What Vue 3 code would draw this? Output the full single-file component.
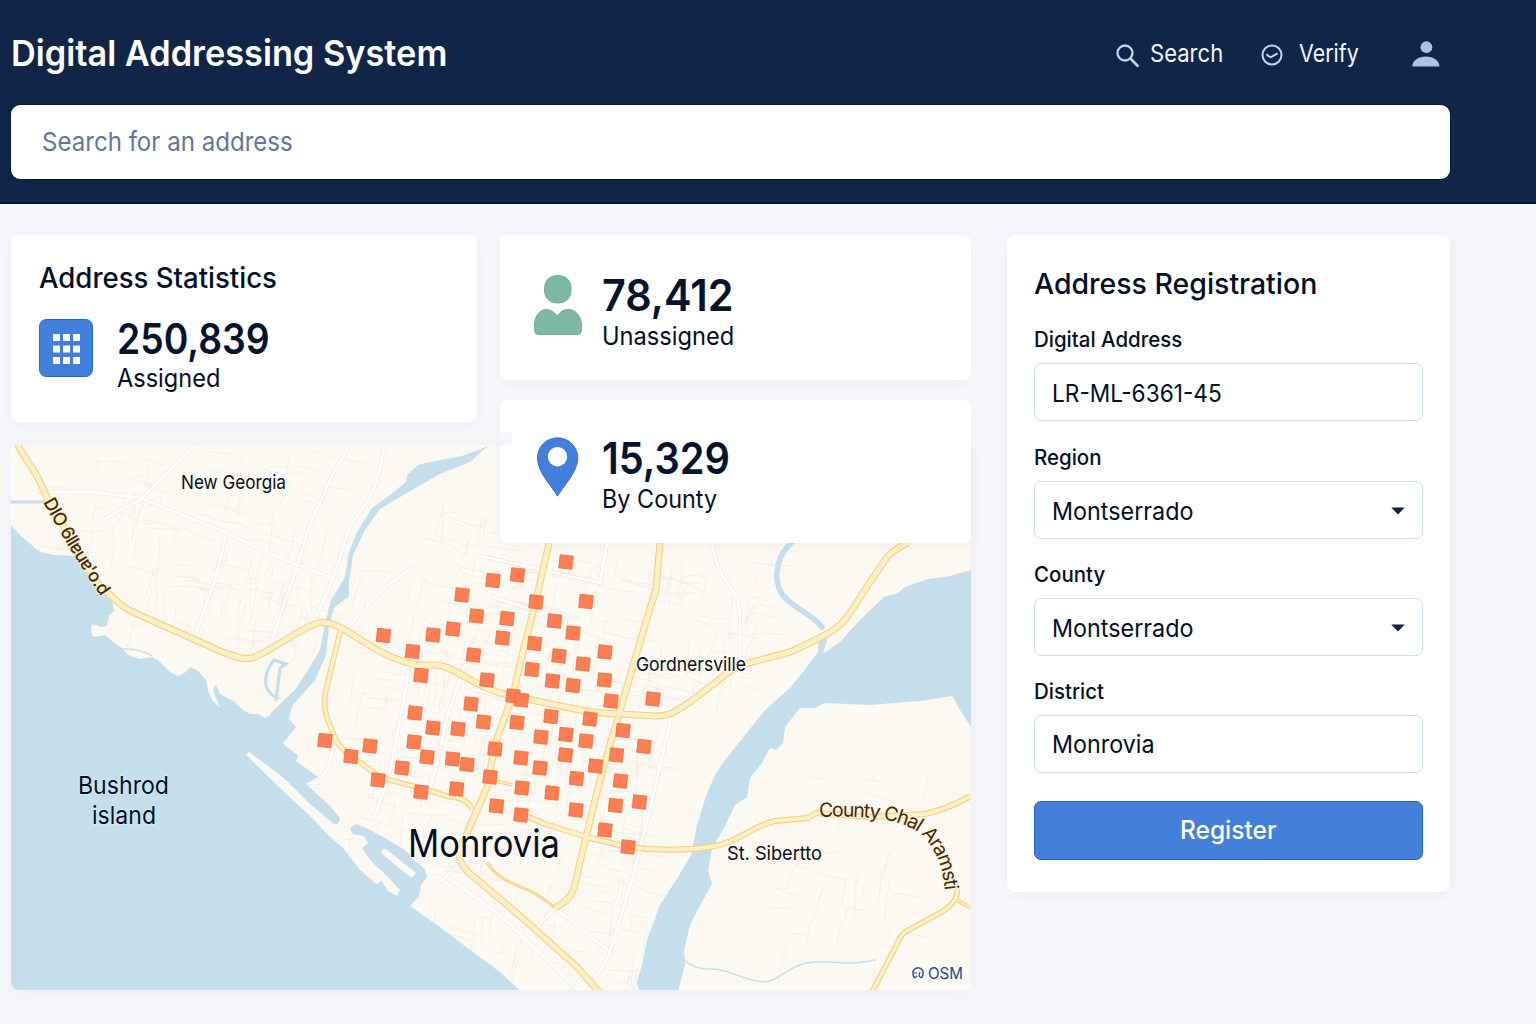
<script setup>
const stats = [
  { id: 'unassigned', value: '78,412', label: 'Unassigned' },
  { id: 'county', value: '15,329', label: 'By County' },
]

const fields = [
  { id: 'address', label: 'Digital Address', value: 'LR-ML-6361-45', select: false },
  { id: 'region', label: 'Region', value: 'Montserrado', select: true },
  { id: 'county', label: 'County', value: 'Montserrado', select: true },
  { id: 'district', label: 'District', value: 'Monrovia', select: false },
]

const gridDots = [0, 1, 2].flatMap((r) => [0, 1, 2].map((c) => ({ x: 14 + c * 10, y: 15 + r * 11.5 })))

// Registered addresses, in map coordinates
const markers = [
  [566, 562], [517.5, 575], [493, 580.5], [462, 595], [536, 602], [586, 601.5], [476.5, 616], [507, 618.5], [554.5, 621],
  [453, 629], [433, 635], [383.5, 635.5], [573, 633], [502.5, 638], [534.5, 643.5], [412.5, 651.5], [605, 652], [559, 656],
  [473.5, 655], [583, 664], [532, 669.5], [421, 675.5], [487, 680], [552.5, 681], [573, 685.5], [604.5, 680], [653, 699],
  [611, 701], [513, 696], [521.5, 700], [471, 704], [415, 713], [551, 716.5], [590, 719], [483.5, 722], [517, 722.5],
  [433, 728], [458, 729], [623, 730.5], [566, 734.5], [541, 737], [325, 740.5], [414, 742], [586, 741], [644, 746.5],
  [370, 746], [495, 749], [565.5, 755], [616.5, 755], [351, 756.5], [427, 757], [521, 758], [452.5, 759], [467, 764.5],
  [595.5, 766], [402, 768], [540, 768], [490, 777], [378, 780], [576.5, 778.5], [620.5, 781], [522, 788], [456.5, 789],
  [421, 792], [552, 793], [496.5, 806], [639.5, 802], [615.5, 805.5], [576, 810], [521, 815], [605, 830], [628, 847],
]

const roads = [
  { w: 6, d: 'M17 443C22 456 34 468 39 480L48 500L95 580L110 595C120 604 125 609 135 613L220 651C236 657 243 660 252 658C270 652 300 628 318 623C330 621 340 627 348 632C375 648 380 655 415 665C425 667 433 663 442 666C462 671 478 690 513 696L570 708Q600 714 620 714L655 716C668 716 672 714 690 702L725 675Q736 667 745 664L790 652Q815 641 830 632C845 624 852 610 862 594L885 560Q892 550 908 543' },
  { w: 4.5, d: 'M341 628L326 690C322 712 328 720 335 738C341 752 356 758 378 776Q384 779 421 788L450 797Q468 798 472 810' },
  { w: 6, d: 'M549 543L535 605Q519 665 514 692L503 722Q493 745 488 785L465 838C456 852 458 862 468 872L520 916L576 966L600 993' },
  { w: 6, d: 'M660 543L656 590L645 625L619 714L600 780L580 862Q574 892 570 896Q566 902 555 908' },
  { w: 1.8, d: 'M487 862C494 876 510 883 528 890Q542 897 555 908' },
  { w: 5, d: 'M521 814L545 824L590 838L628 847C660 851 690 850 710 847C740 842 752 826 775 821L808 818L816 813L870 817L925 814Q945 810 971 796' },
  { w: 2.5, d: 'M492 780L512 785' },
  { w: 3, d: 'M957 900L971 908' },
  { w: 4.5, d: 'M957 888C959 900 950 908 936 915L905 932Q900 936 895 948L872 992' },
]

const lanes = [
  'M50 492L95 492L140 498L220 530L280 558L332 578', 'M198 443L140 500L102 520', 'M385 443C378 480 376 495 352 522C342 545 338 575 316 616',
  'M352 440L330 480L308 530Q300 560 271 642', 'M226 535L215 580L195 636', 'M480 556L530 567L600 583L607 543', 'M412 568L384 588L350 625',
  'M492 597L530 609', 'M409 670L399 725L388 780L374 818', 'M465 665L446 720L438 760L430 788', 'M712 543Q716 570 730 586Q740 598 740 620L740 660',
  'M671 718L652 800L635 870L612 945Q608 962 594 978', 'M332 752Q330 768 318 783L280 782', 'M452 880L500 915L580 992', 'M537 927L555 908L610 952', 'M440 882L458 866',
]

// Faint side streets, laid out from a small seeded generator
function makeStreets() {
  let seed = 7
  const rnd = () => (seed = (seed * 16807) % 2147483647) / 2147483647
  const zones = [
    [130, 450, 330, 640, 120], [350, 560, 660, 700, 130], [340, 690, 660, 850, 150], [430, 850, 650, 985, 80],
    [640, 560, 760, 700, 60], [760, 850, 900, 950, 30], [800, 730, 965, 800, 8], [420, 500, 500, 580, 20], [30, 450, 140, 560, 20],
  ]
  let d = ''
  for (const [x0, y0, x1, y1, n] of zones) {
    for (let i = 0; i < n; i++) {
      const x = x0 + rnd() * (x1 - x0)
      const y = y0 + rnd() * (y1 - y0)
      const a = 0.2 + (rnd() > 0.5 ? Math.PI / 2 : 0) + (rnd() - 0.5) * 0.35
      const l = 10 + rnd() * 34
      const dx = Math.cos(a) * l
      const dy = Math.sin(a) * l
      d += `M${x.toFixed(1)} ${y.toFixed(1)}q${(dx / 2 + (rnd() - 0.5) * 8).toFixed(1)} ${(dy / 2 + (rnd() - 0.5) * 8).toFixed(1)} ${dx.toFixed(1)} ${dy.toFixed(1)}`
    }
  }
  return d
}
const streets = makeStreets()
</script>

<template>
  <div class="app">
    <header class="header">
      <div class="topbar">
        <h1 class="brand t">Digital Addressing System</h1>
        <nav class="nav">
          <a class="nav-item search-link">
            <svg width="24" height="24" viewBox="0 0 24 24" fill="none" stroke="#bdd7f7" stroke-width="2.3">
              <circle cx="9" cy="9" r="7.5" /><path d="M14.4 14.4L22.3 22.6" stroke-width="2.8" />
            </svg>
            <span class="t">Search</span>
          </a>
          <a class="nav-item verify-link">
            <svg width="22" height="22" viewBox="0 0 22 22" fill="none" stroke="#bdd7f7" stroke-width="2">
              <circle cx="11" cy="11" r="9.5" /><path d="M5.4 10.2Q8.6 14 10.8 12.6L16.6 9.4" />
            </svg>
            <span class="t">Verify</span>
          </a>
          <svg class="avatar" width="28" height="26" viewBox="0 0 28 26" fill="#a9c3e6">
            <circle cx="14.4" cy="6.2" r="5.9" /><path d="M0.3 25.6C0.3 19 7 15.4 14 15.4S27.4 19 27.4 25.6Z" />
          </svg>
        </nav>
      </div>
      <div class="search"><span class="t">Search for an address</span></div>
    </header>

    <main class="main">
      <section class="board">
        <div class="map">
          <svg width="960" height="545" viewBox="11 445 960 545">
            <rect x="11" y="445" width="960" height="545" fill="#fcf8f2" />
            <path :d="streets" fill="none" stroke="#f3f0ec" stroke-width="1" />
            <g fill="none" stroke-linecap="round" stroke-linejoin="round">
              <path v-for="(d, i) in lanes" :key="'a' + i" :d="d" stroke="#e9e6e3" stroke-width="4" />
              <path v-for="(d, i) in lanes" :key="'b' + i" :d="d" stroke="#fff" stroke-width="2.8" />
            </g>
            <g fill="#c5deeb">
              <path d="M11 525L21 536L40 552L54 555L76 556L84 570L105 590L112 600L114 611L109 616L107 626L101 627L92 624L91 631L93 637L105 635L112 641L122 648L128 655L140 659L152 657L160 662L170 672L178 676L186 672L190 667L198 671L206 680L208 690L212 700L220 708L213 690L216 684L220 694L235 702L243 710L250 714L258 714L265 718L272 714L280 708L296 727L283 743L285 746L298 755L296 761L318 777L306 784L330 806L340 818L338 824L334 824L310 804L284 778L249 752L246 755L278 786L312 818L328 835L343 848L360 870L376 884L382 881L388 891L397 896L400 890L386 875L372 862L362 848L368 843L364 836L353 834L350 828L356 824L366 828L385 838L405 850L414 860L425 869L427 877L421 885L419 896L410 906L444 930L470 950L500 972L520 991L11 991Z" />
              <path d="M488 446L462 456L430 462L418 465L407 475L406 482L390 495L372 508L357 532L349 552L345 577L331 600L325 624L320 650L308 670L295 690L280 704L270 714L288 722L292 706L315 680L326 655L329 625L334 608L349 596L349 580L353 555L365 530L380 509L410 491L440 474L470 462L488 446Z" />
              <path d="M971 570L950 576L928 579L905 587L898 593L884 597L860 620L840 642L823 654L827 640L826 632L819 636L818 652L803 672L790 688L765 710L745 735L725 760L715 775L706 796L697 825L691 855L678 877L660 905L647 940L642 965L637 982L639 991L678 991L685 965L684 950L690 925L703 900L712 884L708 870L712 848L724 828L735 805L747 797L750 778L762 763L770 748L776 750L783 743L785 727L800 708L815 708L825 703L870 705L920 701L952 696L960 710L971 727Z" />
            </g>
            <g fill="none" stroke="#c5deeb" stroke-linecap="round">
              <path d="M793 541C777 555 774 575 779 588C785 605 810 612 822 627" stroke-width="5.5" />
              <path d="M11 502L46 502" stroke-width="3" />
              <path d="M274 660Q264 672 266 686Q270 696 278 698M274 660L286 664L280 668L276 700" stroke-width="3" />
              <path d="M122 649Q140 648 152 656" stroke-width="1.5" />
              <path d="M684 960Q695 970 712 969C728 968 745 982 765 982C780 981 790 963 815 962C840 961 850 966 874 960" stroke-width="1.4" />
            </g>
            <path d="M381 850L386 849L416 873L412 878L404 872L382 854Z" fill="#fcf8f2" />
            <g fill="none" stroke-linejoin="round">
              <path v-for="(r, i) in roads" :key="'c' + i" :d="r.d" stroke="#f6ce7b" :stroke-width="r.w + 1" />
              <path v-for="(r, i) in roads" :key="'d' + i" :d="r.d" stroke="#fdf0c4" :stroke-width="r.w - 1" />
            </g>
            <g fill="#fc7e52" stroke="#f26a3a" stroke-width="0.8">
              <rect
                v-for="([x, y], i) in markers" :key="i" :x="x - 6.6" :y="y - 6.6" width="13.2" height="13.2"
                :transform="`rotate(6 ${x} ${y})`"
              />
            </g>
            <defs>
              <path id="west-road" d="M43 502Q72 555 102 598" />
              <path id="east-road" d="M819 817C868 815 905 819 923 836C936 850 943 868 945 890" />
            </defs>
            <g class="labels">
              <text x="181" y="488.500" font-size="19" textLength="105" lengthAdjust="spacingAndGlyphs">New Georgia</text>
              <text x="636" y="671" font-size="19" textLength="110" lengthAdjust="spacingAndGlyphs">Gordnersville</text>
              <text x="727" y="860" font-size="19" textLength="95" lengthAdjust="spacingAndGlyphs">St. Sibertto</text>
              <text x="78" y="793.500" font-size="24.500" textLength="91" lengthAdjust="spacingAndGlyphs" class="sea">Bushrod</text>
              <text x="92" y="823.500" font-size="24.500" textLength="64" lengthAdjust="spacingAndGlyphs" class="sea">island</text>
              <text x="408" y="856.500" font-size="38" textLength="152" lengthAdjust="spacingAndGlyphs">Monrovia</text>
              <text font-size="18" class="road west"><textPath href="#west-road" textLength="111">DIO 6llɐuɐ'o.d</textPath></text>
              <text font-size="19.500" class="road"><textPath href="#east-road" textLength="168">County Chal Aramsti</textPath></text>
              <text x="928" y="979" font-size="16" textLength="35" lengthAdjust="spacingAndGlyphs" class="credit">OSM</text>
            </g>
            <g fill="none" stroke="#2a5698" stroke-width="1.500">
              <path d="M914.500 978Q911.500 973 914 969.500Q918 966 922 969.500Q924.500 973 921.500 978" />
              <path d="M914 973L917 973M914.500 978L917 976M920 972L919 976L921.500 978" stroke-width="1.200" />
            </g>
          </svg>
        </div>

        <article class="card assigned">
          <h2 class="t">Address Statistics</h2>
          <div class="stat">
            <svg width="54" height="58" viewBox="0 0 54 58">
              <rect x="0.500" y="0.500" width="53" height="57" rx="7" fill="#417fda" stroke="#1c66d6" />
              <rect v-for="(p, i) in gridDots" :key="i" :x="p.x" :y="p.y" width="7" height="7" fill="#fff" />
            </svg>
            <div class="figures">
              <strong class="t">250,839</strong>
              <span class="t">Assigned</span>
            </div>
          </div>
        </article>

        <div class="side">
          <article v-for="s in stats" :key="s.id" class="card compact" :class="s.id">
            <svg v-if="s.id === 'unassigned'" class="glyph" width="48" height="60" viewBox="0 0 48 60" fill="#7fb7a6" stroke="#5fa68f" stroke-width="0.800">
              <rect x="10.500" y="0.500" width="26.500" height="27.500" rx="12" />
              <path d="M23.300 41C20 36.500 16 34.500 12.500 34.500C5 34.500 0.500 42 0.500 50V55.500Q0.500 59.500 4.500 59.500H43.500Q47.500 59.500 47.500 55.500V50C47.500 42 42 34.500 34.500 34.500C30 34.500 26 36.500 23.300 41Z" />
            </svg>
            <svg v-else class="glyph" width="48" height="60" viewBox="0 0 48 60">
              <path d="M23.500 59.200C18 49.500 3.400 35 3.400 21A20.200 20.200 0 0 1 43.800 21C43.800 35 29 49.500 23.500 59.200Z" fill="#417fda" stroke="#1c66d6" stroke-width="0.800" />
              <circle cx="23.500" cy="19.700" r="9.700" fill="#fff" />
            </svg>
            <div class="figures">
              <strong class="t">{{ s.value }}</strong>
              <span class="t">{{ s.label }}</span>
            </div>
          </article>
        </div>
      </section>

      <form class="card form" @submit.prevent>
        <h2 class="t">Address Registration</h2>
        <div v-for="f in fields" :key="f.id" class="field" :class="f.id">
          <label class="t">{{ f.label }}</label>
          <div class="control">
            <span class="t">{{ f.value }}</span>
            <svg v-if="f.select" width="14" height="8" viewBox="0 0 14 8"><path d="M0.300 0.500H13.700L7.800 6.800Q7 7.500 6.200 6.800Z" fill="#0f2145" /></svg>
          </div>
        </div>
        <button class="submit" type="submit"><span class="t">Register</span></button>
      </form>
    </main>
  </div>
</template>

<style>
body { background: #f5f5fa; }
</style>

<style scoped>
* { box-sizing: border-box; }
.app {
  width: 1536px; height: 1024px; overflow: hidden;
  background: #f5f5fa; color: #050f26;
  font-family: Inter, "Liberation Sans", sans-serif;
}
.t { display: block; width: max-content; white-space: nowrap; transform: scaleX(var(--sx, 0.93)); transform-origin: 0 50%; }
h1, h2 { margin: 0; }

.header { height: 203.5px; background: #112548; border-bottom: 2px solid #061534; padding: 0 86px 0 11px; }
.topbar { display: flex; justify-content: space-between; height: 105px; padding-top: 31px; }
.brand { --sx: 0.953; color: #fff; font-size: 36px; line-height: 44px; font-weight: 600; }
.nav { display: flex; align-items: flex-start; color: #f2f6fd; font-size: 24.5px; line-height: 30px; font-weight: 400; padding-top: 7px; }
.nav-item { display: flex; }
.search-link { width: 145px; gap: 10px; }
.search-link svg { margin-top: 6px; }
.search-link .t { --sx: 0.9; }
.verify-link { width: 151px; gap: 16px; }
.verify-link svg { margin-top: 6px; }
.verify-link .t { --sx: 0.875; }
.avatar { margin: 3px 10px 0 0; }
.search { height: 74px; background: #fff; border-radius: 9px; padding: 21px 31px; color: #63759a; font-size: 26px; line-height: 32px; font-weight: 400; box-shadow: 0 0 0 1px #0a1b3a; }
.search .t { --sx: 0.926; }

.main { display: flex; align-items: flex-start; gap: 36px; padding: 31.5px 86px 0 11px; }
.board { display: grid; grid-template-columns: 466px 471px; column-gap: 23px; align-items: start; }
.card { background: #fff; border-radius: 8px; box-shadow: 0 4px 14px rgba(40, 50, 90, 0.035); }
.map { grid-area: 1 / 1 / 2 / 3; margin-top: 210px; height: 545px; border-radius: 0 0 0 8px; overflow: hidden; box-shadow: 0 6px 20px rgba(40, 50, 90, 0.03); }
.map svg { display: block; }
.assigned { grid-area: 1 / 1 / 2 / 2; height: 187px; padding: 26px 28px; }
.assigned h2 { --sx: 0.984; font-size: 28px; line-height: 34px; font-weight: 500; }
.stat { display: flex; gap: 24px; margin-top: 24px; }
.figures { display: flex; flex-direction: column; }
.figures strong { font-size: 42px; line-height: 44px; font-weight: 600; color: #06132e; }
.figures span { font-size: 25px; line-height: 30px; font-weight: 400; }
.stat .figures { margin-top: -2px; }
.stat strong { --sx: 0.888; }
.stat .figures span { --sx: 0.942; margin-top: 2px; }
.side { grid-area: 1 / 2 / 2 / 3; display: grid; row-gap: 20px; }
.compact { display: flex; gap: 20px; padding: 38px 34px; }
.compact.unassigned { height: 145px; padding-top: 40px; }
.compact.county { height: 143px; position: relative; padding-top: 37px; }
.compact.county::before { content: ""; position: absolute; left: 0; top: 32px; width: 12px; height: 13px; background: #f5f5fa; }
.compact strong { font-size: 44px; line-height: 44px; }
.unassigned strong { --sx: 0.94; }
.county strong { --sx: 0.902; }
.compact .figures span { --sx: 0.946; margin-top: 4px; }
.county .figures span { --sx: 0.936; }
.compact .figures { margin-top: -2px; margin-left: -0.5px; }
.county .figures { margin-top: -1px; }

.form { width: 443px; height: 657px; padding: 32px 27px 0; }
.form h2 { --sx: 0.981; font-size: 29px; line-height: 34px; font-weight: 500; }
.field { height: 117px; }
.field.address { margin-top: 24px; height: 118px; }
.field label { --sx: 0.975; font-size: 21px; line-height: 30px; font-weight: 500; }
.control { display: flex; justify-content: space-between; align-items: center; height: 58px; margin-top: 8px; border: 1.5px solid #cbdcf5; border-radius: 7px; padding: 2px 17px 0 16.5px; font-size: 24.5px; line-height: 30px; font-weight: 400; }
.control .t { --sx: 0.952; }
.address .control .t { --sx: 0.925; }
.district .control { padding-top: 0; }
.submit { display: flex; justify-content: center; align-items: center; width: 389px; height: 59px; margin-top: 7px; padding: 0 0 2px; border: 1.5px solid #1c66d6; border-radius: 7px; background: #437fd9; color: #fff; font: 500 25.5px/30px Inter, "Liberation Sans", sans-serif; }
.submit .t { --sx: 0.96; transform-origin: 50% 50%; }

.labels { fill: #050f26; font-weight: 400; paint-order: stroke; stroke: #fffaf2; stroke-width: 2.5px; stroke-linejoin: round; }
.labels .sea { stroke: #d6e9f3; stroke-width: 2px; }
.labels .road { fill: #442a08; stroke: #fdf3d8; stroke-width: 2px; }
.labels .west { font-weight: 500; }
.labels .credit { fill: #1f4b8e; stroke: none; }
</style>
